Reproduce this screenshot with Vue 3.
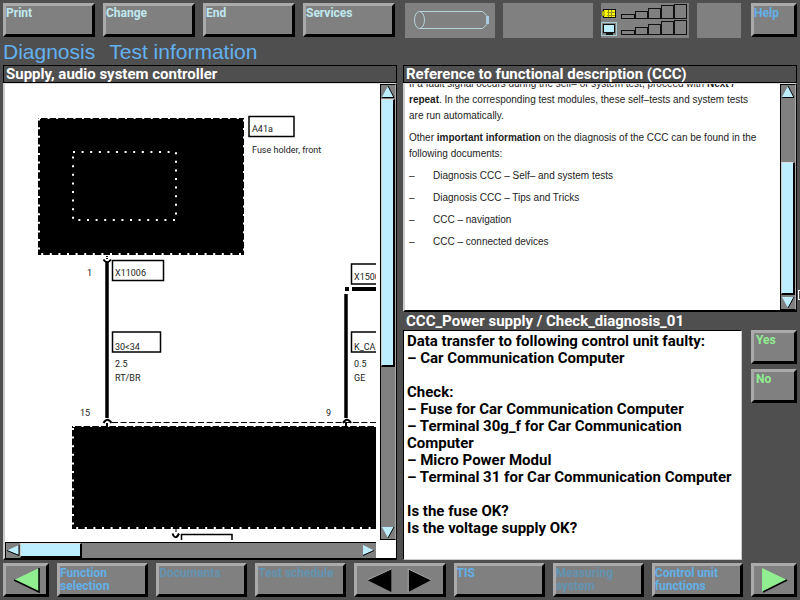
<script setup>
const menu = ['Print', 'Change', 'End', 'Services']

const signalBars = [
  { x: 621, w: 13, h: 4 },
  { x: 635, w: 12, h: 7 },
  { x: 648, w: 12, h: 10 },
  { x: 661, w: 12, h: 13 },
  { x: 674, w: 12, h: 14 },
]

const documents = [
  'Diagnosis CCC – Self– and system tests',
  'Diagnosis CCC – Tips and Tricks',
  'CCC – navigation',
  'CCC – connected devices',
]

const question = `Data transfer to following control unit faulty:
– Car Communication Computer

Check:
– Fuse for Car Communication Computer
– Terminal 30g_f for Car Communication Computer
– Micro Power Modul
– Terminal 31 for Car Communication Computer

Is the fuse OK?
Is the voltage supply OK?`
</script>

<template>
  <div class="screen">
    <header class="topbar">
      <nav class="menu">
        <button v-for="item in menu" :key="item" class="key pale">{{ item }}</button>
      </nav>
      <div class="status">
        <div class="indicators">
          <div class="cell">
            <svg viewBox="405 3 90 35" class="art">
              <g fill="none" stroke="#b4d4dc">
                <ellipse cx="419.5" cy="20" rx="5" ry="8.5" />
                <path d="M419.5 11.5H482.500L487.500 16V24L482.500 28.500H419.500" />
              </g>
              <rect x="486" y="16" width="3" height="8" fill="#a8cce0" />
            </svg>
          </div>
          <div class="cell"></div>
          <div class="cell">
            <svg viewBox="601 3 88 35" class="art">
              <rect x="603.5" y="9.500" width="12" height="8" fill="#ffff00" stroke="#111" />
              <rect x="602" y="11" width="2" height="5" fill="#ffff00" stroke="#111" stroke-width="0.500" />
              <path d="M608.5 10V17M611.500 10V17M607 12.500H615M607 15.500H615" stroke="#96960a" />
              <rect x="601.500" y="22.500" width="15" height="13" fill="none" stroke="#a8ccd4" />
              <rect x="603.5" y="24.500" width="11" height="8" fill="#bdeeff" stroke="#111" />
              <path d="M606 34H613" stroke="#111" stroke-width="2" />
              <g fill="none" stroke="#111">
                <rect v-for="b in signalBars" :key="b.x" :x="b.x + 0.5" :y="18.5 - b.h" :width="b.w" :height="b.h" />
                <rect v-for="b in signalBars" :key="'l' + b.x" :x="b.x + 0.5" :y="34.5 - b.h" :width="b.w" :height="b.h" />
              </g>
            </svg>
          </div>
          <div class="cell"></div>
        </div>
        <button class="key blue help">Help</button>
      </div>
    </header>

    <h1 class="title"><span>Diagnosis</span><span>Test information</span></h1>

    <main class="main">
      <section class="column">
        <h2 class="bar">Supply, audio system controller</h2>
        <div class="panel diagram">
          <div class="canvas">
            <svg width="372" height="456" viewBox="5 84 372 456">
              <rect x="38" y="118" width="206" height="137" />
              <rect x="39" y="118" width="205" height="136" class="dots" />
              <rect x="73" y="152" width="103" height="68" class="dots" />

              <rect x="249" y="116.500" width="45" height="20" class="box" />
              <text x="252" y="132">A41a</text>
              <text x="252" y="153">Fuse holder, front</text>

              <path d="M107 256V259" stroke="#000" stroke-width="2" stroke-dasharray="1 1" />
              <path d="M103.500 259.500Q107 265 111 259.500" class="clip" />
              <path d="M107 262V418" stroke="#000" stroke-width="3.500" />
              <text x="87" y="276">1</text>
              <rect x="112.500" y="260.500" width="51" height="20" class="box" />
              <text x="115" y="276">X11006</text>

              <rect x="112.500" y="332" width="48" height="20" class="box" />
              <text x="115" y="350">30&lt;34</text>
              <text x="115" y="367">2.5</text>
              <text x="115" y="381">RT/BR</text>
              <text x="80" y="416">15</text>

              <rect x="351.500" y="264" width="51" height="20" class="box" />
              <text x="354" y="280">X1500</text>
              <rect x="345" y="287" width="4" height="4" />
              <path d="M352 289H377" stroke="#000" stroke-width="4" />
              <path d="M346 294V418" stroke="#000" stroke-width="3.500" />
              <rect x="351.500" y="332" width="51" height="20" class="box" />
              <text x="354" y="350">K_CAN</text>
              <text x="354" y="367">0.5</text>
              <text x="354" y="381">GE</text>
              <text x="326" y="416">9</text>

              <path d="M112 422.500H377" stroke="#000" stroke-dasharray="6 2.600" />
              <rect x="72" y="426" width="330" height="103" />
              <rect x="73" y="426" width="330" height="102" class="dots" />
              <path d="M103.500 423Q107.500 416.500 111.500 423M343 423Q347 416.500 351 423" class="clip" />
              <path d="M107 423V427M346 423V427" stroke="#000" stroke-width="2" />

              <path d="M176 529V532" stroke="#000" />
              <path d="M172.500 533.500Q175.500 541 179 533.500" class="clip" />
              <path d="M181.500 540V534.500H232V540" class="box" />
            </svg>
          </div>
          <div class="vbar">
            <button aria-label="Scroll diagram up" class="arrow">
              <svg viewBox="0 0 14 14"><path d="M1 12L7 1L13 12Z" fill="#bdeeff" /><path d="M7 1L13 12.500H1" class="edge" /></svg>
            </button>
            <div class="track"><div class="thumb up"></div></div>
            <button aria-label="Scroll diagram down" class="arrow">
              <svg viewBox="0 0 14 14"><path d="M1 2L7 13L13 2Z" fill="#bdeeff" /><path d="M13 2L7 13" class="edge" /></svg>
            </button>
          </div>
          <div class="hbar">
            <button aria-label="Scroll diagram left" class="arrow">
              <svg viewBox="0 0 14 14"><path d="M13 2L1 7.500L13 12Z" fill="#bdeeff" /><path d="M13 2V12.500L1 7.500" class="edge" /></svg>
            </button>
            <div class="track"><div class="thumb side"></div></div>
            <button aria-label="Scroll diagram right" class="arrow">
              <svg viewBox="0 0 14 14"><path d="M1 2L12 7.500L1 12Z" fill="#bdeeff" /><path d="M12 7.500L1 12.500" class="edge" /></svg>
            </button>
          </div>
        </div>
      </section>

      <section class="column">
        <h2 class="bar">Reference to functional description (CCC)</h2>
        <div class="panel reference">
          <div class="doc">
            <div class="doc-text">
              <p>If a fault signal occurs during the self– or system test, proceed with <b>Next / repeat</b>. In the corresponding test modules, these self–tests and system tests are run automatically.</p>
              <p>Other <b>important information</b> on the diagnosis of the CCC can be found in the following documents:</p>
              <ul>
                <li v-for="d in documents" :key="d">{{ d }}</li>
              </ul>
            </div>
          </div>
          <div class="vbar">
            <button aria-label="Scroll text up" class="arrow">
              <svg viewBox="0 0 14 14"><path d="M1 12L7 1L13 12Z" fill="#bdeeff" /><path d="M7 1L13 12.500H1" class="edge" /></svg>
            </button>
            <div class="track end"><div class="thumb low"></div></div>
            <button aria-label="Scroll text down" class="arrow">
              <svg viewBox="0 0 14 14"><path d="M1 2L7 13L13 2Z" fill="#bdeeff" /><path d="M13 2L7 13" class="edge" /></svg>
            </button>
          </div>
        </div>
        <h2 class="bar plain">CCC_Power supply / Check_diagnosis_01</h2>
        <div class="dialog">
          <p class="question">{{ question }}</p>
          <div class="answers">
            <button class="key green">Yes</button>
            <button class="key green">No</button>
          </div>
        </div>
      </section>
    </main>

    <footer class="bottom">
      <button class="key icon" aria-label="Back">
        <svg viewBox="0 0 40 28"><path d="M33 2V26L8 14Z" fill="#90ee90" /><path d="M33 2V26L8 14" fill="none" stroke="#000" stroke-width="1.500" /></svg>
      </button>
      <button class="key blue">Function<br />selection</button>
      <button class="key" disabled>Documents</button>
      <button class="key" disabled>Test schedule</button>
      <div class="key pair">
        <button aria-label="Previous page"><svg viewBox="0 0 42 28"><path d="M34 3V26L10 14Z" /><path d="M34 3L10 14" stroke="#aaa" /></svg></button>
        <button aria-label="Next page"><svg viewBox="0 0 42 28"><path d="M8 3V26L31 14Z" /><path d="M31 14L8 3V26" fill="none" stroke="#aaa" /></svg></button>
      </div>
      <button class="key blue">TIS</button>
      <button class="key" disabled>Measuring<br />system</button>
      <button class="key blue">Control unit<br />functions</button>
      <button class="key icon" aria-label="Forward">
        <svg viewBox="0 0 40 28"><path d="M8 2V26L33 14Z" fill="#90ee90" /><path d="M33 14L9 26" stroke="#000" stroke-width="1.500" /></svg>
      </button>
    </footer>
    <span class="pointer"></span>
  </div>
</template>

<style>
body {
  background: #4f4f4f;
}
</style>

<style scoped>
* {
  box-sizing: border-box;
}

.screen {
  position: relative;
  display: flex;
  flex-direction: column;
  min-height: 100vh;
  padding: 3px;
  overflow: hidden;
  background: #4f4f4f;
  color: #000;
  font-family: "Liberation Sans", Arial, sans-serif;
}

button {
  padding: 0;
  border: 0;
  background: none;
  font: inherit;
}

svg {
  display: block;
}

.topbar,
.main {
  display: grid;
  grid-template-columns: minmax(0, 1fr) minmax(0, 1fr);
}

.topbar {
  column-gap: 10px;
}

.menu {
  display: grid;
  grid-template-columns: repeat(4, 1fr);
  gap: 8px;
}

.key {
  display: flex;
  align-items: flex-start;
  height: 34px;
  padding: 1px 0 0;
  border: 3px solid;
  border-color: #aaa #000 #000 #aaa;
  background: #808080;
  color: #6294b2;
  font-family: Roboto, "Liberation Sans", sans-serif;
  font-size: 12px;
  font-weight: bold;
  line-height: 13px;
  text-align: left;
}

.pale {
  color: #c0e8f0;
}

.blue {
  color: #62b0e8;
}

.green {
  color: #90ee90;
}

.status {
  display: flex;
  gap: 10px;
}

.indicators {
  display: grid;
  flex: 1;
  grid-template-columns: 90fr 90fr 88fr 44fr;
  gap: 8px;
}

.cell {
  height: 35px;
  background: #808080;
}

.art {
  width: 100%;
  height: 100%;
}

.help {
  width: 46px;
}

.title {
  display: flex;
  gap: 14px;
  margin: 0;
  color: #63b1f0;
  font-size: 21px;
  font-weight: normal;
  line-height: 27px;
}

.main {
  flex: 1;
  column-gap: 6px;
}

.column {
  display: flex;
  flex-direction: column;
  min-width: 0;
}

.bar {
  flex: none;
  height: 18px;
  margin: 0;
  padding-left: 2px;
  border: 1px solid #000;
  color: #fff;
  font-family: Roboto, "Liberation Sans", sans-serif;
  font-size: 15px;
  font-weight: bold;
  line-height: 16px;
  white-space: nowrap;
}

.plain {
  border-color: transparent;
}

.panel {
  flex: 1;
  border: solid;
  border-width: 1px 1px 2px 2px;
  border-color: #ddd #000 #000 #ccc;
  background: #fff;
}

.diagram {
  display: grid;
  grid-template-columns: minmax(0, 1fr) 16px;
  grid-template-rows: minmax(0, 1fr) 16px;
  gap: 2px 4px;
}

.canvas {
  overflow: hidden;
}

.canvas text {
  fill: #222;
  font-family: Roboto, "Liberation Sans", sans-serif;
  font-size: 9px;
}

.dots {
  fill: none;
  stroke: #fff;
  stroke-width: 2;
  stroke-dasharray: 2 6.600;
}

.box {
  fill: none;
  stroke: #000;
  stroke-width: 1.500;
}

.clip {
  fill: none;
  stroke: #000;
  stroke-width: 2;
}

.vbar,
.hbar {
  display: flex;
  border: 1px solid #000;
  background: #808080;
}

.vbar {
  flex-direction: column;
  width: 16px;
  border-right-color: #aaa;
}

.hbar {
  border-right: 0;
  border-bottom: 0;
}

.arrow {
  flex: none;
  width: 14px;
  height: 14px;
}

.arrow svg {
  width: 14px;
  height: 14px;
}

.edge {
  fill: none;
  stroke: #000;
}

.track {
  display: flex;
  flex: 1;
}

.end {
  align-items: flex-end;
}

.thumb {
  border: solid;
  border-width: 1px 2px 2px 1px;
  border-color: #ddd #000 #000 #ccc;
  background: #bdeeff;
}

.up {
  width: 100%;
  height: 63%;
}

.low {
  width: 100%;
  height: 68%;
}

.side {
  width: 18%;
}

.reference {
  display: flex;
  flex: none;
}

.doc {
  flex: 1;
  height: 226px;
  overflow: hidden;
}

.doc-text {
  margin: -8px 20px 0 4px;
  color: #1c1c1c;
  font-size: 10px;
  line-height: 16px;
}

.doc-text p {
  margin: 0 0 6px;
}

.doc-text ul {
  margin: 0;
  padding: 0;
  list-style: none;
}

.doc-text li {
  display: flex;
  margin-bottom: 6px;
}

.doc-text li::before {
  content: "–";
  width: 24px;
}

.dialog {
  display: flex;
  flex: 1;
  gap: 9px;
}

.question {
  flex: 1;
  margin: 0;
  padding: 2px 0 0 3px;
  border: 1px solid #000;
  border-right-color: #ccc;
  border-bottom-color: #ccc;
  background: #fff;
  font-family: Roboto, "Liberation Sans", sans-serif;
  font-size: 15px;
  font-weight: bold;
  line-height: 17px;
  white-space: pre-line;
}

.answers {
  display: flex;
  flex-direction: column;
  gap: 5px;
}

.answers .key {
  width: 46px;
  padding-left: 2px;
}

.bottom {
  display: grid;
  grid-template-columns: 46fr repeat(7, 91fr) 46fr;
  gap: 8px;
  margin-top: 3px;
}

.icon,
.pair {
  padding: 0;
}

.icon svg {
  width: 100%;
  height: 28px;
}

.pair button {
  flex: 1;
}

.pair svg {
  width: 100%;
  height: 28px;
}

.pointer {
  position: absolute;
  top: 290px;
  right: -2px;
  width: 4px;
  height: 10px;
  border: 1px solid #fff;
}
</style>
